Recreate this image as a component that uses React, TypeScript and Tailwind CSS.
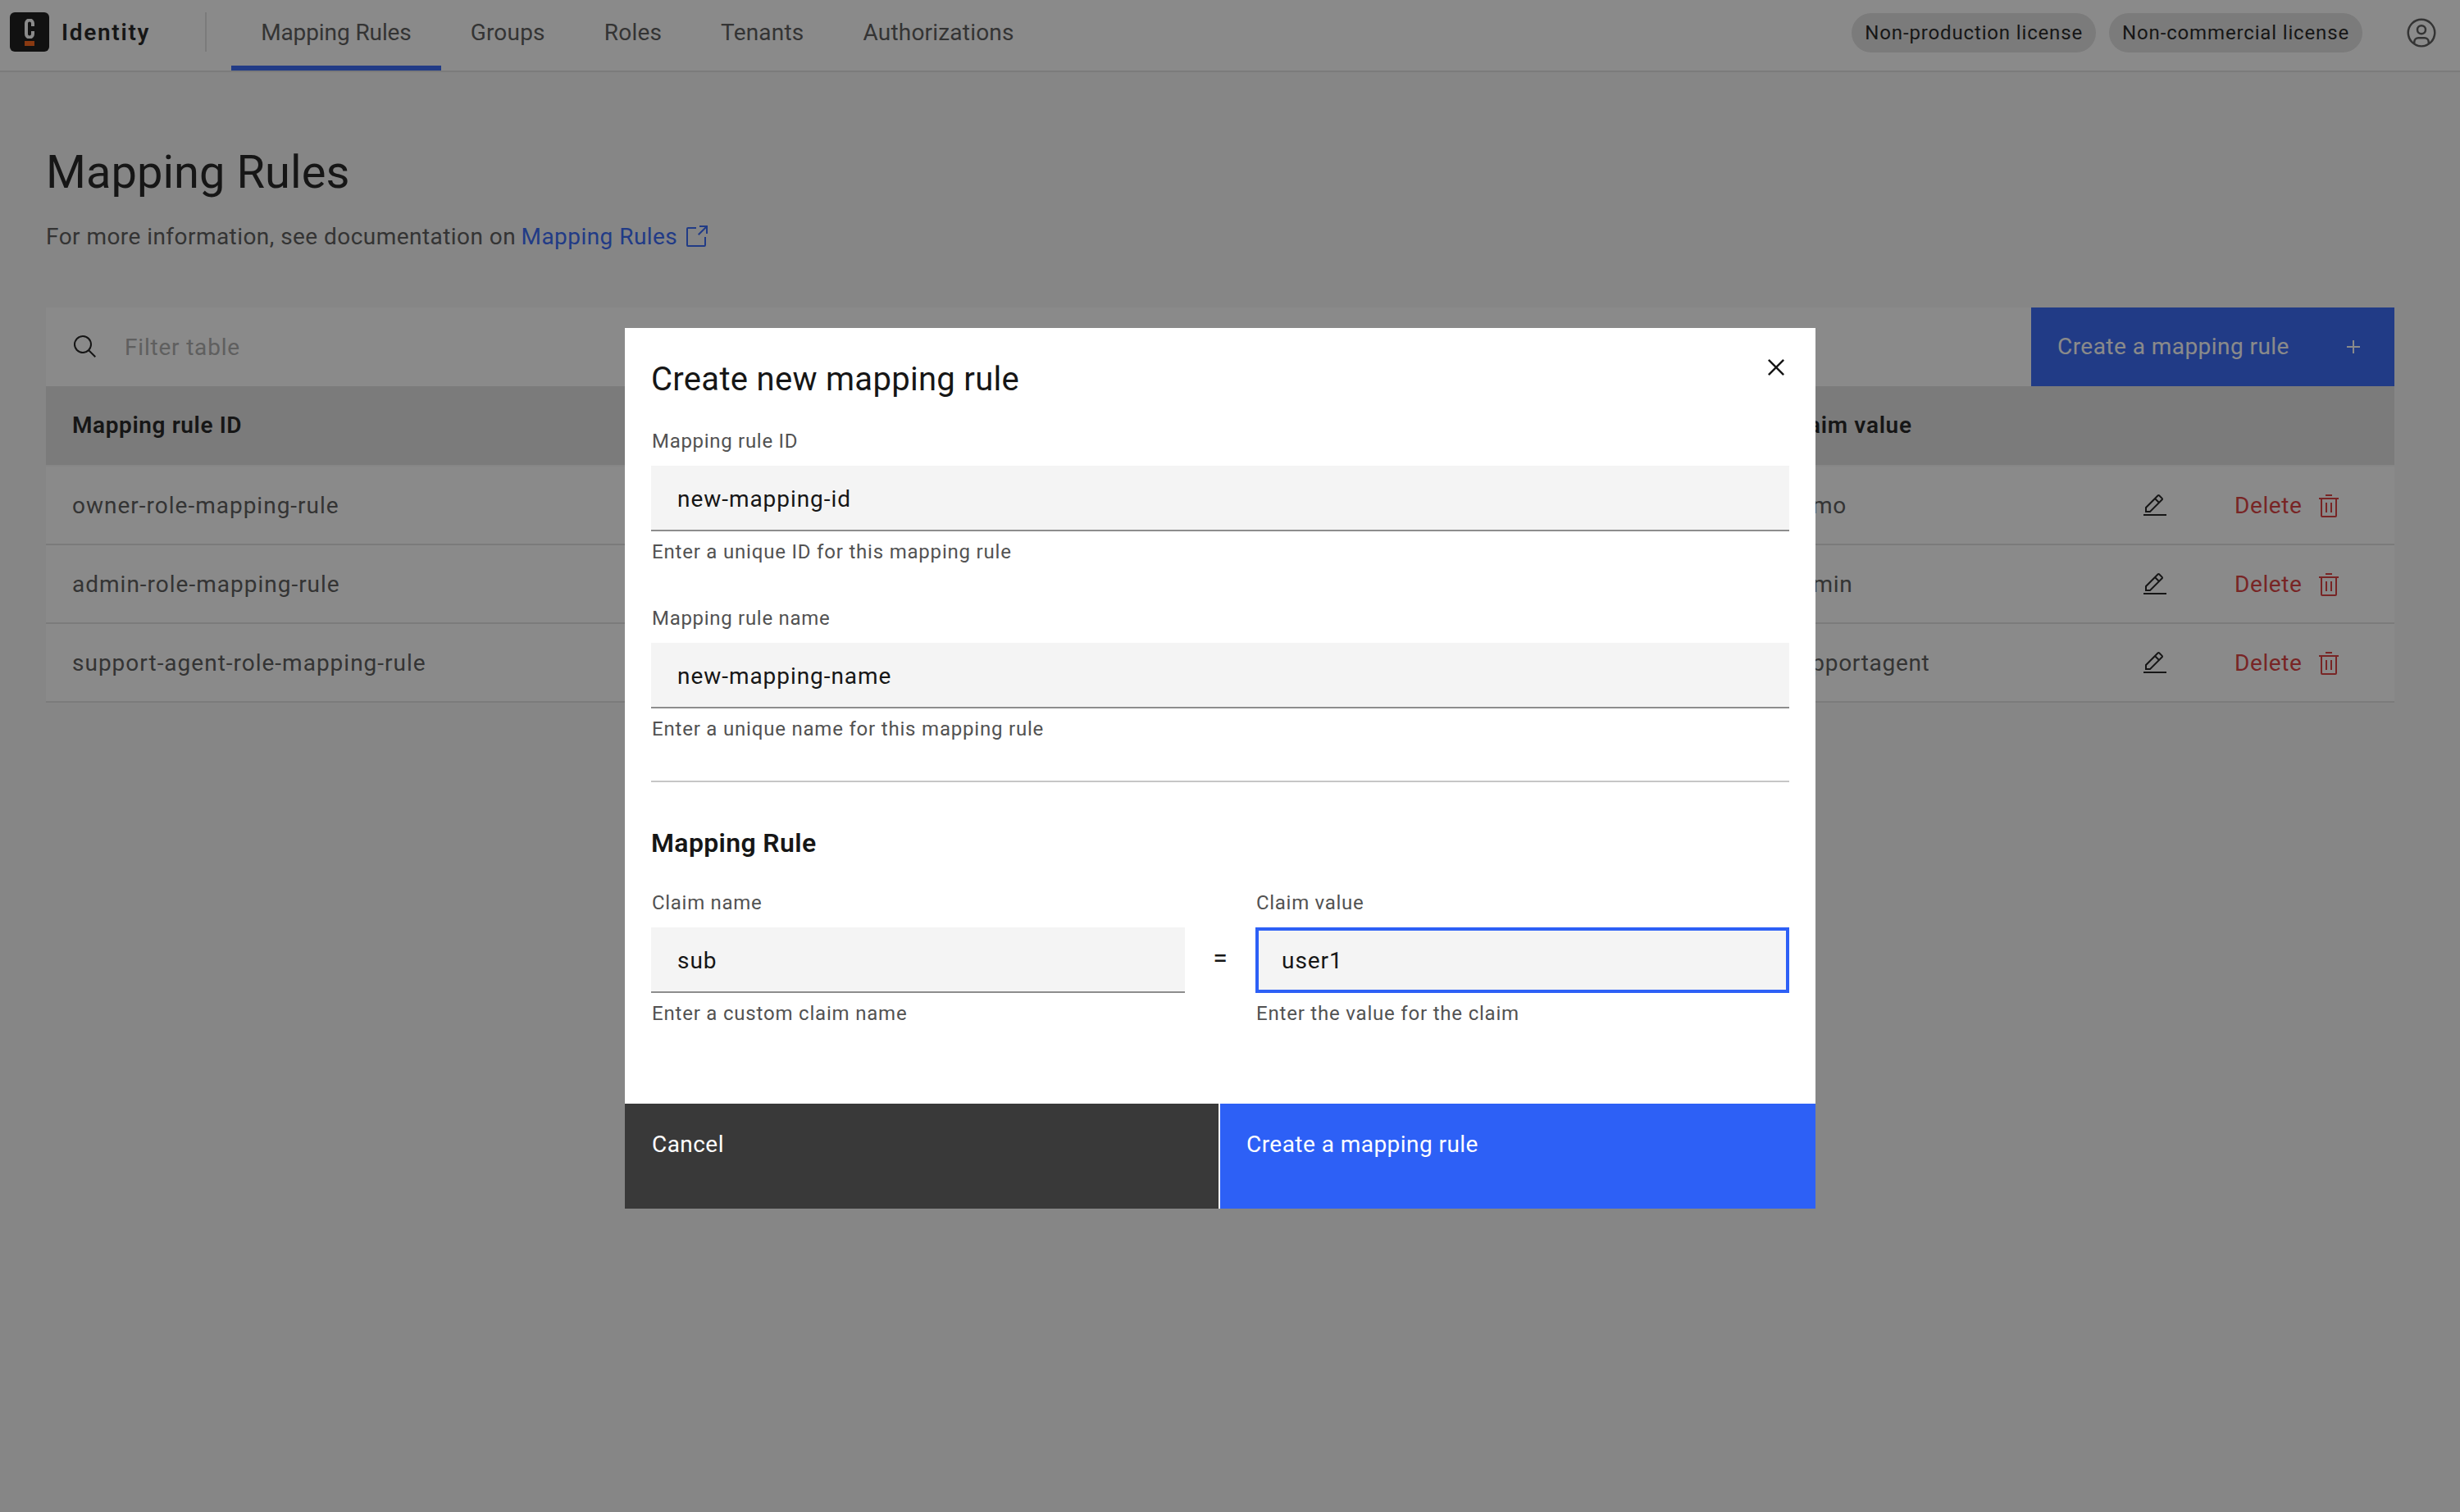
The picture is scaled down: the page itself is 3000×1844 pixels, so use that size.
const tabs = ['Mapping Rules', 'Groups', 'Roles', 'Tenants', 'Authorizations'];
const rows = [
  { id: 'owner-role-mapping-rule', value: 'demo' },
  { id: 'admin-role-mapping-rule', value: 'admin' },
  { id: 'support-agent-role-mapping-rule', value: 'supportagent' },
];

function Icon({ d, size = 32, className }: { d: string[]; size?: number; className?: string }) {
  return (
    <svg width={size} height={size} viewBox="0 0 32 32" fill="currentColor" className={className}>
      {d.map((p) => (
        <path key={p} d={p} />
      ))}
    </svg>
  );
}

const userIcon = [
  'M16,8a5,5,0,1,0,5,5A5,5,0,0,0,16,8Zm0,8a3,3,0,1,1,3-3A3.0034,3.0034,0,0,1,16,16Z',
  'M16,2A14,14,0,1,0,30,16,14.0158,14.0158,0,0,0,16,2ZM10,26.3765V25a3.0033,3.0033,0,0,1,3-3h6a3.0033,3.0033,0,0,1,3,3v1.3765a11.8989,11.8989,0,0,1-12,0Zm13.9925-1.4507A5.0016,5.0016,0,0,0,19,20H13a5.0016,5.0016,0,0,0-4.9925,4.9258,12,12,0,1,1,15.985,0Z',
];
const launchIcon = [
  'M26,28H6a2.0023,2.0023,0,0,1-2-2V6A2.0023,2.0023,0,0,1,6,4H16V6H6V26H26V16h2V26A2.0023,2.0023,0,0,1,26,28Z',
  'M20 2L20 4 26.586 4 18 12.586 19.414 14 28 5.414 28 12 30 12 30 2 20 2z',
];
const searchIcon = [
  'M29,27.5859l-7.5521-7.5521a11.0177,11.0177,0,1,0-1.4141,1.4141L27.5859,29ZM4,13a9,9,0,1,1,9,9A9.01,9.01,0,0,1,4,13Z',
];
const addIcon = ['M17 15L17 8 15 8 15 15 8 15 8 17 15 17 15 24 17 24 17 17 24 17 24 15 17 15z'];
const editIcon = [
  'M2 26H30V28H2zM25.4 9c.8-.8.8-2 0-2.8 0 0 0 0 0 0l-3.6-3.6c-.8-.8-2-.8-2.8 0 0 0 0 0 0 0l-15 15V24h6.4L25.4 9zM20.4 4L24 7.6l-3 3L17.4 7 20.4 4zM6 22v-3.6l10-10 3.6 3.6-10 10H6z',
];
const trashIcon = [
  'M12 12H14V24H12zM18 12H20V24H18z',
  'M4 6V8H6V28a2 2 0 002 2H24a2 2 0 002-2V8h2V6zM8 28V8H24V28zM12 2H20V4H12z',
];
const closeIcon = ['M24 9.4L22.6 8 16 14.6 9.4 8 8 9.4 14.6 16 8 22.6 9.4 24 16 17.4 22.6 24 24 22.6 17.4 16 24 9.4z'];

function Logo() {
  return (
    <div className="flex h-12 w-12 flex-col items-center rounded-[6px] bg-[#0c0c0c] pt-2">
      <svg width="12" height="24" viewBox="0 0 12 24" fill="none" stroke="#ffffff" strokeWidth="4">
        <path d="M10 9V5.5a3.5 3.5 0 0 0-8 0v13a3.5 3.5 0 0 0 8 0V15" />
      </svg>
      <div className="mt-[3px] h-[6px] w-3 bg-[#fc5d0d]" />
    </div>
  );
}

function Field({ label, value, helper, focused }: { label: string; value: string; helper: string; focused?: boolean }) {
  return (
    <div className="flex flex-col">
      <label className="h-[32px] pl-px text-[24px] leading-[32px] tracking-[0.7px] text-[#525252]">{label}</label>
      <div
        className={
          focused
            ? 'mt-[14px] flex h-[80px] items-center border-4 border-[#2d60f6] bg-[#f4f4f4] pl-[28px] pt-[2px] text-[28px] tracking-[0.95px] text-[#161616]'
            : 'mt-[14px] flex h-[80px] items-center border-b-2 border-[#8d8d8d] bg-[#f4f4f4] pl-[32px] pt-1 text-[28px] tracking-[0.95px] text-[#161616]'
        }
      >
        {value}
      </div>
      <p className="mt-[9px] h-[32px] pl-px text-[24px] leading-[32px] tracking-[0.8px] text-[#525252]">{helper}</p>
    </div>
  );
}

export default function App() {
  return (
    <div className="relative h-[1844px] w-full overflow-hidden bg-[#f7f7f7] font-[Roboto,sans-serif]">
      <header className="flex h-[88px] items-start border-b-2 border-[#e0e0e0] bg-white">
        <div className="ml-3 mt-[15px] flex items-center">
          <Logo />
          <span className="ml-[15px] pt-[2px] text-[28px] font-semibold tracking-[1.7px] text-[#161616]">Identity</span>
          <div className="ml-[67px] h-12 w-[2px] bg-[#e0e0e0]" />
        </div>
        <nav className="ml-[30px] flex h-[86px]">
          {tabs.map((t, i) => (
            <a
              key={t}
              className={
                i === 0
                  ? 'flex items-center border-b-[6px] border-[#2d60f6] px-9 text-[28px] tracking-[-0.1px] text-[#525252]'
                  : 'flex items-center px-9 pb-[6px] text-[28px] tracking-[0.2px] text-[#525252]'
              }
            >
              {t}
            </a>
          ))}
        </nav>
        <div className="ml-auto mr-[27px] flex h-[86px] items-center pb-[6px]">
          <span className="flex h-12 items-center rounded-full bg-[#e0e0e0] px-4 text-[24px] tracking-[0.85px] text-[#161616]">
            Non-production license
          </span>
          <span className="ml-[16px] flex h-12 items-center rounded-full bg-[#e0e0e0] px-4 text-[24px] tracking-[0.85px] text-[#161616]">
            Non-commercial license
          </span>
          <Icon d={userIcon} size={40} className="ml-[52px] text-[#525252]" />
        </div>
      </header>

      <main className="pl-14 pr-20">
        <h1 className="mt-[86px] text-[56px] leading-[72px] tracking-[0.05px] text-[#161616]">Mapping Rules</h1>
        <p className="mt-[23px] flex items-center text-[28px] leading-[40px] tracking-[0.45px] text-[#525252]">
          For more information, see documentation on&nbsp;
          <a className="-ml-[1px] text-[#2d60f6]">Mapping Rules</a>
          <Icon d={launchIcon} className="ml-[7px] text-[#2d60f6]" />
        </p>

        <section className="mt-[66px]">
          <div className="flex h-24 items-center bg-white">
            <Icon d={searchIcon} className="ml-8 text-[#161616]" />
            <span className="ml-[32px] pt-[2px] text-[28px] tracking-[0.8px] text-[#a8a8a8]">Filter table</span>
            <button className="ml-auto flex h-24 w-[443px] items-center bg-[#2d60f6] pl-8 text-[28px] tracking-[0.45px] text-white">
              Create a mapping rule
              <Icon d={addIcon} className="ml-auto mr-[34px]" />
            </button>
          </div>
          <div className="flex h-24 items-center bg-[#e0e0e0] text-[28px] font-semibold text-[#161616]">
            <span className="ml-8 w-[2090px] tracking-[0.6px]">Mapping rule ID</span>
            <span className="tracking-[0.7px]">Claim value</span>
          </div>
          <div className="pt-[2px]">
            {rows.map((r) => (
              <div
                key={r.id}
                className="flex h-24 items-center border-b-2 border-[#e0e0e0] bg-white pt-[1px] text-[28px] text-[#525252]"
              >
                <span className="ml-8 w-[2090px] tracking-[1px]">{r.id}</span>
                <span className="w-[434px] tracking-[0.7px]">{r.value}</span>
                <Icon d={editIcon} className="text-[#161616]" />
                <span className="ml-[81px] tracking-[0.6px] text-[#da3434]">Delete</span>
                <Icon d={trashIcon} className="ml-[16px] text-[#da3434]" />
              </div>
            ))}
          </div>
        </section>
      </main>

      {/* modal overlay */}
      <div className="absolute inset-0 bg-[rgba(22,22,22,0.5)] pl-[762px] pt-[400px]">
        <div className="relative flex h-[1074px] w-[1452px] flex-col bg-white">
          <button className="absolute right-[28px] top-[28px] text-[#161616]">
            <Icon d={closeIcon} size={40} />
          </button>
          <div className="flex-1 px-8">
            <h2 className="mt-[37px] text-[40px] leading-[52px] tracking-[0.3px] text-[#161616]">Create new mapping rule</h2>
            <div className="mt-[33px] flex flex-col gap-[49px]">
              <Field label="Mapping rule ID" value="new-mapping-id" helper="Enter a unique ID for this mapping rule" />
              <Field label="Mapping rule name" value="new-mapping-name" helper="Enter a unique name for this mapping rule" />
            </div>
            <div className="mt-[47px] h-[2px] bg-[#c6c6c6]" />
            <h3 className="mt-[52px] text-[32px] font-semibold leading-[44px] tracking-[0.35px] text-[#161616]">Mapping Rule</h3>
            <div className="mt-[35px] flex items-start">
              <div className="w-[651px]">
                <Field label="Claim name" value="sub" helper="Enter a custom claim name" />
              </div>
              <span className="mt-[43px] w-[86px] text-center text-[32px] leading-[80px] text-[#161616]">=</span>
              <div className="w-[651px]">
                <Field label="Claim value" value="user1" helper="Enter the value for the claim" focused />
              </div>
            </div>
          </div>
          <div className="flex h-[128px] text-[28px] tracking-[0.45px] text-white">
            <button className="w-[724px] bg-[#393939] pb-[28px] pl-[33px] text-left">Cancel</button>
            <button className="ml-[2px] flex-1 bg-[#2d60f6] pb-[28px] pl-[32px] text-left">Create a mapping rule</button>
          </div>
        </div>
      </div>
    </div>
  );
}
